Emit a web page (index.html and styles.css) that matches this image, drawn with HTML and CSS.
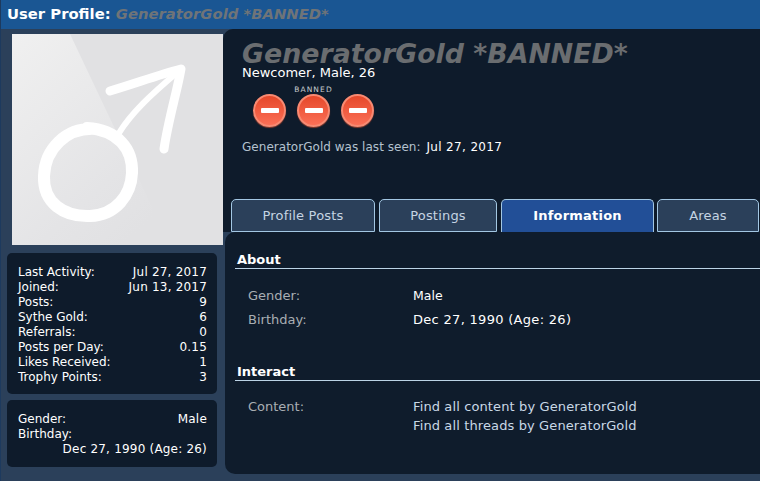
FILE: index.html
```html
<!DOCTYPE html>
<html>
<head>
    <title>User Profile: GeneratorGold</title>
    <link rel="stylesheet" href="styles.css">
</head>
<body>
    <h1 class="titlebar">User Profile: <em class="banned-name">GeneratorGold *BANNED*</em></h1>
    <div class="profile">
        <div class="sidebar">
            <div class="avatar">
                <svg class="avatar-art" viewBox="0 0 211 211" width="211" height="211">
                    <defs>
                        <linearGradient id="shine" x1="0" y1="0" x2="0.7" y2="1">
                            <stop offset="0" stop-color="#f0f0f0"/>
                            <stop offset="0.75" stop-color="#e4e4e6"/>
                            <stop offset="1" stop-color="#e1e1e3"/>
                        </linearGradient>
                    </defs>
                    <polygon points="0,0 58,0 158,211 0,211" fill="url(#shine)"/>
                    <g fill="none" stroke="#fff" stroke-linecap="round" stroke-linejoin="round">
                        <path d="M84 95C54 93 33 115 32 142C31 169 52 183 78 182C104 181 119 161 120 139C121 115 106 96 75 94" stroke-width="12"/>
                        <path d="M107 99C120 78 140 60 161 42" stroke-width="6"/>
                        <path d="M98 57C122 50 146 41 169 35C165 58 156 87 152 115" stroke-width="9"/>
                    </g>
                </svg>
            </div>
            <div class="stats-box">
                <dl class="stat"><dt>Last Activity:</dt><dd>Jul 27, 2017</dd></dl>
                <dl class="stat"><dt>Joined:</dt><dd>Jun 13, 2017</dd></dl>
                <dl class="stat"><dt>Posts:</dt><dd>9</dd></dl>
                <dl class="stat"><dt>Sythe Gold:</dt><dd>6</dd></dl>
                <dl class="stat"><dt>Referrals:</dt><dd>0</dd></dl>
                <dl class="stat"><dt>Posts per Day:</dt><dd>0.15</dd></dl>
                <dl class="stat"><dt>Likes Received:</dt><dd>1</dd></dl>
                <dl class="stat"><dt>Trophy Points:</dt><dd>3</dd></dl>
            </div>
            <div class="stats-box">
                <dl class="stat"><dt>Gender:</dt><dd>Male</dd></dl>
                <dl class="stat"><dt>Birthday:</dt><dd></dd></dl>
                <div class="stat-right">Dec 27, 1990 (Age: 26)</div>
            </div>
        </div>
        <div class="main">
            <div class="head-panel">
                <h2 class="username">GeneratorGold *BANNED*</h2>
                <div class="usertitle">Newcomer, Male, 26</div>
                <div class="badges">
                    <div class="badge"><span class="badge-label"></span><span class="no-entry"></span></div>
                    <div class="badge"><span class="badge-label">BANNED</span><span class="no-entry"></span></div>
                    <div class="badge"><span class="badge-label"></span><span class="no-entry"></span></div>
                </div>
                <div class="last-seen">GeneratorGold was last seen: <span class="white date">Jul 27, 2017</span></div>
            </div>
            <div class="tabs">
                <div class="tab tab-posts">Profile Posts</div>
                <div class="tab tab-postings">Postings</div>
                <div class="tab tab-info active">Information</div>
                <div class="tab tab-areas">Areas</div>
            </div>
            <div class="content">
                <h3 class="section-head">About</h3>
                <div class="rows rows-about">
                    <div class="row"><span class="row-label">Gender:</span><span class="white male">Male</span></div>
                    <div class="row"><span class="row-label">Birthday:</span><span class="white birthday">Dec 27, 1990 (Age: 26)</span></div>
                </div>
                <h3 class="section-head">Interact</h3>
                <div class="rows rows-interact">
                    <div class="row">
                        <span class="row-label">Content:</span>
                        <div class="links">
                            <div>Find all content by GeneratorGold</div>
                            <div>Find all threads by GeneratorGold</div>
                        </div>
                    </div>
                </div>
            </div>
        </div>
    </div>
</body>
</html>
```

FILE: styles.css
```css
* { box-sizing: border-box; }
html, body { margin: 0; height: 481px; overflow: hidden; }
body { font-family: "DejaVu Sans", Verdana, sans-serif; font-size: 12px; background: #2b405a; color: #fff; border-left: 1px solid #1d3a5e; }

.titlebar { margin: 0; height: 29px; padding: 0 6px; background: #1a5693; font-size: 14.8px; line-height: 28px; font-weight: bold; color: #fff; }
.banned-name { color: #6f7478; }

.profile { display: flex; }
.sidebar { width: 222px; flex: none; padding: 5px 0 0 11px; }
.avatar { width: 211px; height: 211px; background: #e1e1e3; }
.avatar-art { display: block; }

.stats-box { width: 210px; margin: 8px 0 0 -5px; padding: 12px 10px 9px 11px; background: #0e1b2b; border-radius: 5px; line-height: 15px; }
.stats-box + .stats-box { margin-top: 6px; padding-bottom: 10px; }
.stat { display: flex; justify-content: space-between; margin: 0; height: 15px; }
.stat dd { margin: 0; letter-spacing: 0.2px; }
.stat-right { text-align: right; letter-spacing: 0.2px; }

.main { flex: 1; min-width: 0; }
.head-panel { height: 170px; background: #0e1b2b; border-radius: 10px 0 0 0; padding: 11px 0 0 19px; }
.username { margin: 0; font-size: 26.8px; line-height: 27px; font-style: italic; font-weight: bold; color: #6a6d70; }
.usertitle { font-size: 13px; line-height: 15px; margin-top: -2px; }
.badges { display: flex; gap: 11px; margin: 5px 0 0 11px; }
.badge { width: 33px; display: flex; flex-direction: column; align-items: center; }
.badge-label { height: 9px; font-size: 7.5px; line-height: 9px; letter-spacing: 1.1px; color: #c9ccd0; white-space: nowrap; }
.no-entry { width: 33px; height: 33px; flex: none; border-radius: 50%; display: flex; align-items: center; justify-content: center; background: linear-gradient(#e5482a, #fb6f56); border: 2px solid #f88a72; box-shadow: 0 1px 1px #8a3b2c; }
.no-entry::before { content: ""; width: 18px; height: 5px; background: #fff; border-radius: 1px; }
.last-seen { margin-top: 13px; line-height: 15px; color: #b4c2cf; letter-spacing: 0.03px; }
.white { color: #fff; }
.date { margin-left: 2px; letter-spacing: 0.35px; }

.tabs { display: flex; height: 33px; background: #0e1b2b; padding-left: 8px; gap: 4px; }
.tab { height: 33px; background: #2b405a; border: 1px solid #a3c7e3; border-radius: 5px 5px 0 0; color: #c5d4e2; font-size: 13px; letter-spacing: 0.2px; text-align: center; line-height: 31px; }
.tab-posts { width: 144px; }
.tab-postings { width: 118px; }
.tab-info { width: 153px; }
.tab-areas { width: 102px; margin-left: -1px; }
.tab.active { background: #224f97; border-bottom: none; font-weight: bold; color: #fff; }

.content { height: 242px; margin-left: 2px; background: #0f1c2c; border-radius: 10px 0 0 10px; padding-top: 19px; }
.section-head { margin: 0 0 0 10px; border-bottom: 1px solid #bcd3e6; font-size: 13px; line-height: 17px; height: 18px; padding-left: 2px; }
.rows { padding: 17px 0 0 23px; font-size: 13px; }
.rows-about { height: 94px; }
.rows-interact { padding-top: 16px; }
.row { display: flex; line-height: 19px; margin-bottom: 5px; }
.row-label { width: 165px; flex: none; color: #a9aeb3; }
.male { font-size: 12.5px; }
.birthday { letter-spacing: 0.3px; }
.links { color: #c9d8e6; letter-spacing: 0.12px; }
```
